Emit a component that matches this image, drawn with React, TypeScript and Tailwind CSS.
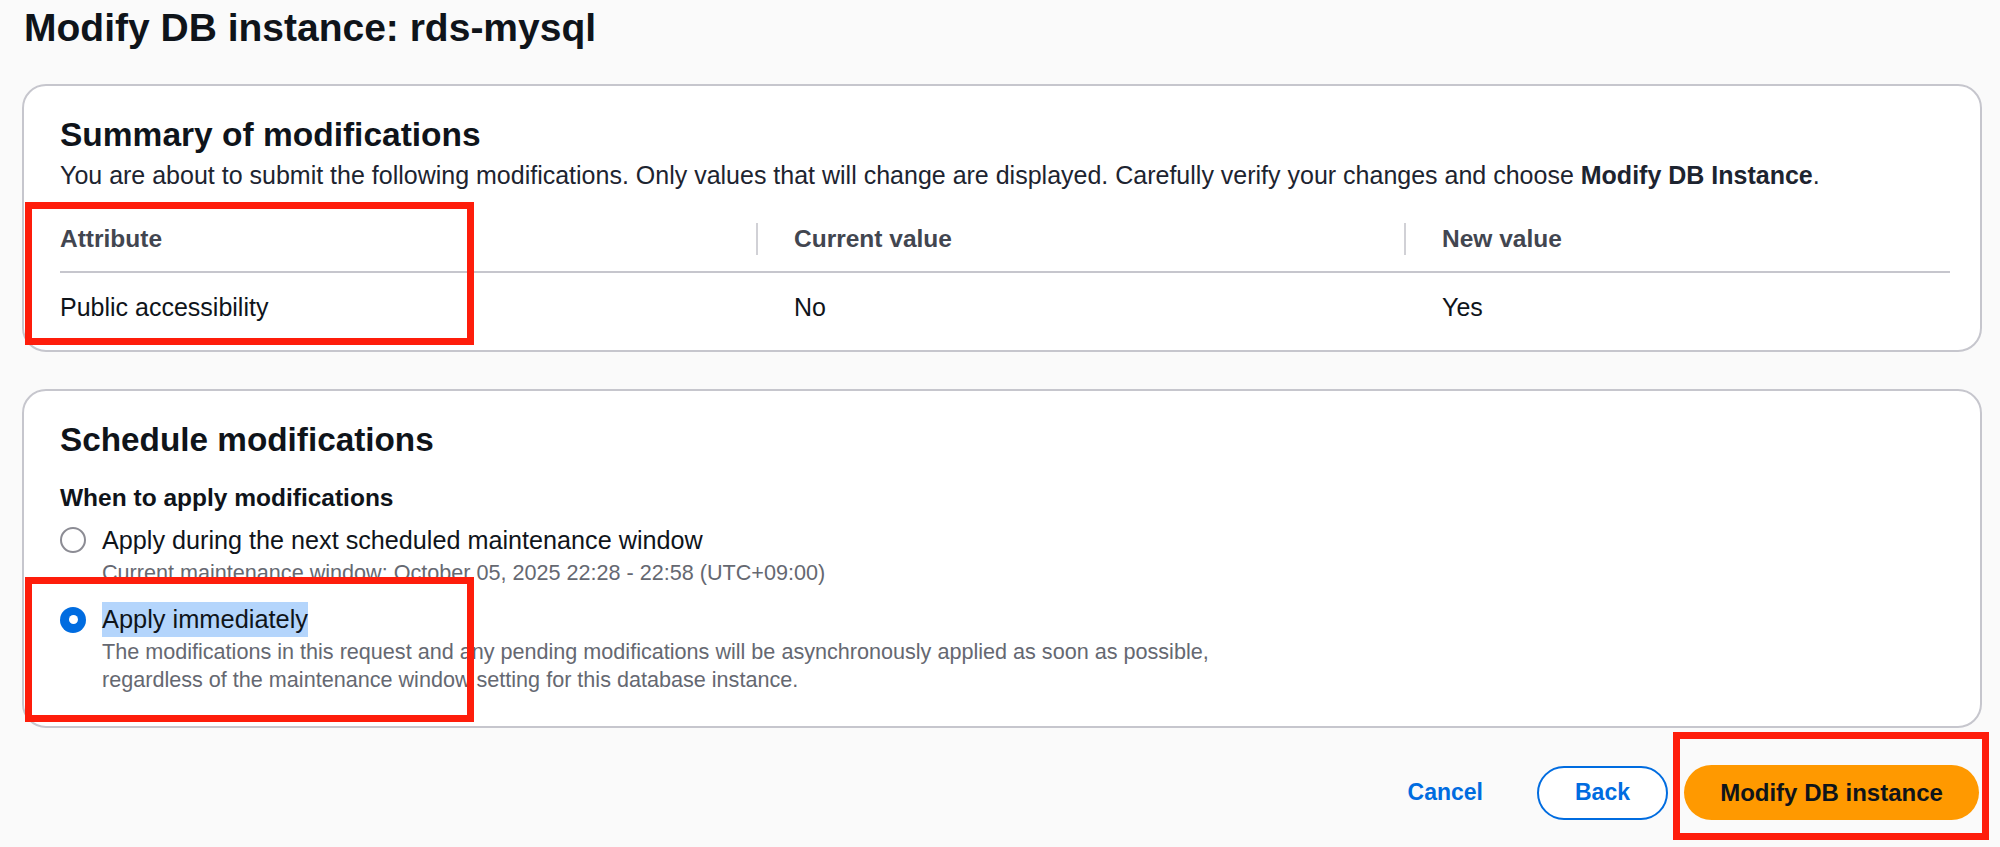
import React from "react";

const RED_BOX = "absolute border-[7px] border-[#fe1d0b] pointer-events-none";

function Radio({ checked }: { checked?: boolean }) {
  if (checked) {
    return (
      <span className="w-[26px] h-[26px] rounded-full bg-[#006ce0] flex items-center justify-center shrink-0">
        <span className="w-[9px] h-[9px] rounded-full bg-white"></span>
      </span>
    );
  }
  return <span className="w-[26px] h-[26px] rounded-full border-2 border-[#8c8c94] bg-white shrink-0"></span>;
}

export default function App() {
  return (
    <div className="relative w-[2000px] h-[847px] overflow-hidden bg-[#fafafa] text-[#0f141a] font-['Liberation_Sans',Arial,sans-serif]">
      <h1 className="pl-[24px] pt-[4px] text-[39px] leading-[48px] font-bold">Modify DB instance: rds-mysql</h1>

      {/* summary card */}
      <section className="ml-[22px] mt-[32px] w-[1960px] bg-white border-2 border-[#c6c6cd] rounded-[24px] pl-[36px] pr-[30px] pt-[29px] pb-[27px]">
        <h2 className="text-[33.5px] leading-[40px] font-bold">Summary of modifications</h2>
        <p className="mt-[4px] text-[25px] leading-[32px] text-[#1d2430]">
          You are about to submit the following modifications. Only values that will change are displayed. Carefully verify your changes and choose <span className="font-bold">Modify DB Instance</span>.
        </p>

        <div className="mt-[22px] grid grid-cols-[696px_648px_1fr] pt-[10px] pb-[16px] border-b-2 border-[#c6c6cd] text-[24.5px] leading-[32px] font-bold text-[#424650]">
          <div>Attribute</div>
          <div className="border-l-2 border-[#d1d1d6] pl-[36px]">Current value</div>
          <div className="border-l-2 border-[#d1d1d6] pl-[36px]">New value</div>
        </div>
        <div className="pt-[18px] grid grid-cols-[696px_648px_1fr] text-[25px] leading-[32px]">
          <div>Public accessibility</div>
          <div className="pl-[38px]">No</div>
          <div className="pl-[38px]">Yes</div>
        </div>
      </section>

      {/* schedule card */}
      <section className="ml-[22px] mt-[37px] w-[1960px] bg-white border-2 border-[#c6c6cd] rounded-[24px] pl-[36px] pr-[30px] pt-[29px] pb-[32px]">
        <h2 className="text-[33.3px] leading-[40px] font-bold">Schedule modifications</h2>
        <div className="mt-[22px] text-[24.5px] leading-[32px] font-bold">When to apply modifications</div>

        <div className="mt-[10px] flex items-start">
          <div className="h-[32px] flex items-center">
            <Radio />
          </div>
          <div className="ml-[16px]">
            <div className="text-[25.2px] leading-[32px]">Apply during the next scheduled maintenance window</div>
            <div className="mt-[3px] text-[21.6px] leading-[28px] text-[#656871]">
              Current maintenance window: October 05, 2025 22:28 - 22:58 (UTC+09:00)
            </div>
          </div>
        </div>

        <div className="mt-[15px] flex items-start">
          <div className="h-[35px] flex items-center">
            <Radio checked />
          </div>
          <div className="ml-[16px]">
            <div className="text-[25.4px] leading-[35px]">
              <span className="inline-block bg-[#b4d5fc]">Apply immediately</span>
            </div>
            <div className="mt-[1px] text-[21.6px] leading-[28px] text-[#656871]">
              The modifications in this request and any pending modifications will be asynchronously applied as soon as possible,
              <br />
              regardless of the maintenance window setting for this database instance.
            </div>
          </div>
        </div>
      </section>

      {/* actions */}
      <div className="mt-[37px] pr-[21px] flex justify-end items-center">
        <button className="mr-[54px] text-[23px] font-bold text-[#006ce0]">Cancel</button>
        <button className="w-[131px] h-[54px] rounded-full border-2 border-[#006ce0] bg-white text-[23px] font-bold text-[#006ce0]">
          Back
        </button>
        <button className="ml-[16px] w-[295px] h-[55px] rounded-full bg-[#ff9900] text-[24px] font-bold text-[#0f141a]">
          Modify DB instance
        </button>
      </div>

      {/* annotation boxes */}
      <div className={`${RED_BOX} left-[25px] top-[202px] w-[449px] h-[143px]`}></div>
      <div className={`${RED_BOX} left-[25px] top-[577px] w-[449px] h-[145px]`}></div>
      <div className={`${RED_BOX} left-[1673px] top-[732px] w-[316px] h-[108px]`}></div>
    </div>
  );
}
